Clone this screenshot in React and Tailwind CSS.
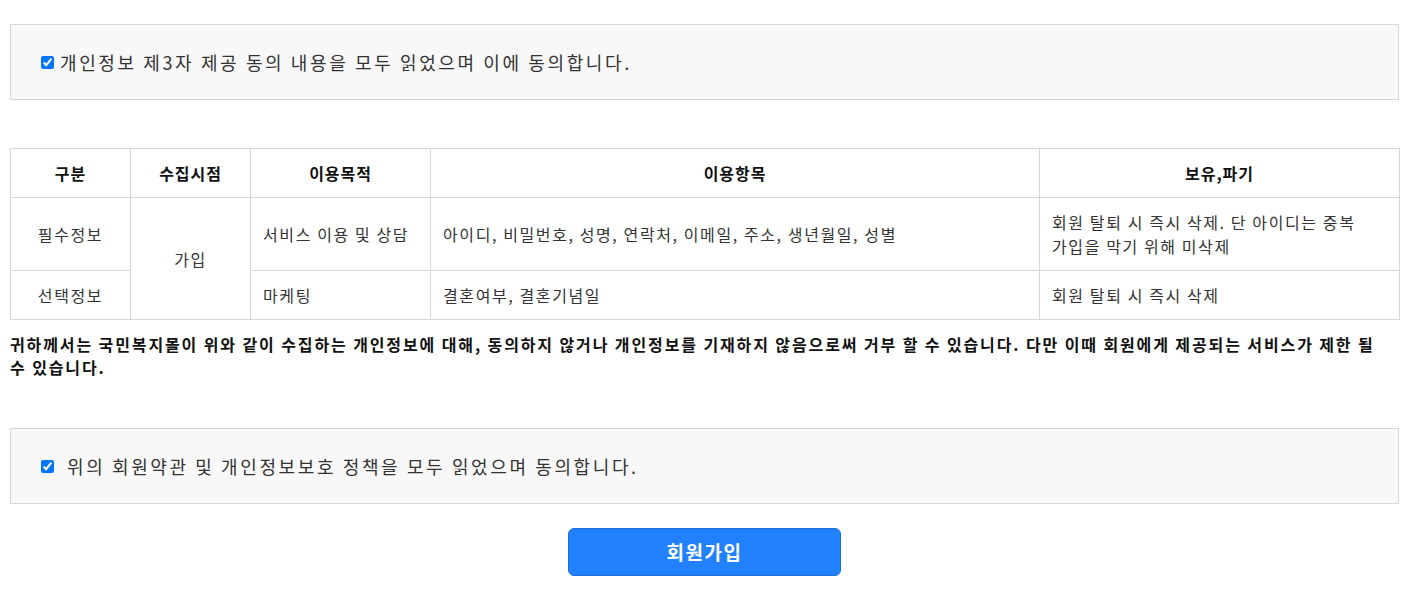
import React from 'react';

const font = { fontFamily: '"Noto Sans CJK KR", "Noto Sans", sans-serif' };

function AgreeBox({ label, spaced }) {
  return (
    <div className="ml-[10px] mr-[15px] h-[76px] border border-[#d8d8d8] bg-[#f8f8f8] flex items-center pl-[30px]">
      <label className="flex items-center text-[18px] text-[#333] tracking-[0.145em]">
        <input type="checkbox" defaultChecked className="w-[13px] h-[13px]" />
        <span className={spaced ? 'ml-[13px]' : 'ml-[6px]'}>{label}</span>
      </label>
    </div>
  );
}

export default function App() {
  const th = 'border border-[#d8d8d8] font-bold text-[16px] text-[#111] h-[49px] text-center tracking-[0.06em]';
  const td = 'border border-[#d8d8d8] text-[16px] text-[#333] px-[12px] tracking-[0.1em] break-keep';

  return (
    <div style={font} className="bg-white w-[1414px] h-[594px] pt-[24px]">
      <AgreeBox label="개인정보 제3자 제공 동의 내용을 모두 읽었으며 이에 동의합니다." />

      <div className="ml-[10px] mr-[15px] mt-[48px]">
        <table className="w-[1389px] border-collapse table-fixed">
          <colgroup>
            <col className="w-[120px]" />
            <col className="w-[120px]" />
            <col className="w-[180px]" />
            <col className="w-[609px]" />
            <col className="w-[360px]" />
          </colgroup>
          <thead>
            <tr>
              <th className={th}>구분</th>
              <th className={th}>수집시점</th>
              <th className={th}>이용목적</th>
              <th className={th}>이용항목</th>
              <th className={th}>보유,파기</th>
            </tr>
          </thead>
          <tbody>
            <tr className="h-[73px]">
              <td className={td + ' text-center'}>필수정보</td>
              <td rowSpan={2} className={td + ' text-center'}>가입</td>
              <td className={td}>서비스 이용 및 상담</td>
              <td className={td}>아이디, 비밀번호, 성명, 연락처, 이메일, 주소, 생년월일, 성별</td>
              <td className={td + ' leading-[24px]'}>회원 탈퇴 시 즉시 삭제. 단 아이디는 중복 가입을 막기 위해 미삭제</td>
            </tr>
            <tr className="h-[49px]">
              <td className={td + ' text-center'}>선택정보</td>
              <td className={td}>마케팅</td>
              <td className={td}>결혼여부, 결혼기념일</td>
              <td className={td}>회원 탈퇴 시 즉시 삭제</td>
            </tr>
          </tbody>
        </table>
        <p className="mt-[13px] pr-[10px] text-[16px] font-bold text-[#111] leading-[23px] tracking-[0.118em] break-keep">
          귀하께서는 국민복지몰이 위와 같이 수집하는 개인정보에 대해, 동의하지 않거나 개인정보를 기재하지 않음으로써 거부 할 수 있습니다. 다만 이때 회원에게 제공되는 서비스가 제한 될 수 있습니다.
        </p>
      </div>

      <div className="mt-[49px]">
        <AgreeBox spaced label="위의 회원약관 및 개인정보보호 정책을 모두 읽었으며 동의합니다." />
      </div>

      <div className="ml-[10px] mr-[15px] flex justify-center mt-[24px]">
        <button className="w-[273px] h-[48px] rounded-[6px] bg-[#2181ff] border border-[#1f6fd6] text-white font-bold text-[19px] tracking-[0.08em]">
          회원가입
        </button>
      </div>
    </div>
  );
}
